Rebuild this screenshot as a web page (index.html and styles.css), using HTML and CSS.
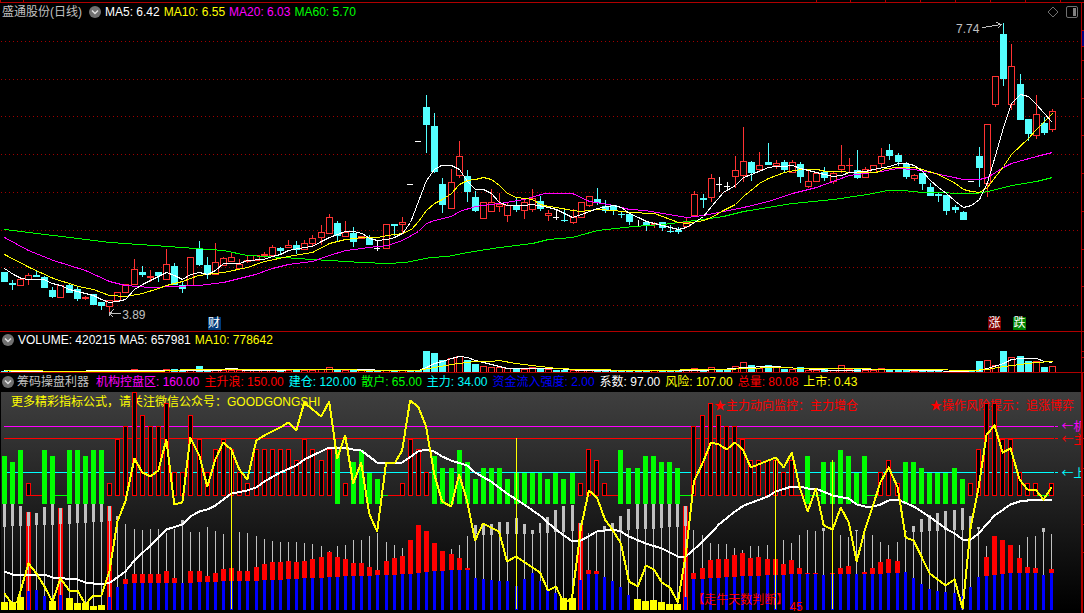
FILE: index.html
```html
<!DOCTYPE html>
<html lang="zh-CN">
<head>
<meta charset="utf-8">
<meta name="viewport" content="width=device-width, initial-scale=1">
<title>盛通股份(日线)</title>
<link rel="stylesheet" href="styles.css">
</head>
<body>
<main class="terminal">
  <section class="panel price" aria-label="日线">
    <svg class="plot" id="price-plot" viewBox="0 0 1081 331" preserveAspectRatio="none" aria-hidden="true"></svg>
    <header class="legend legend-price">
      <h1 class="name">盛通股份(日线)</h1>
      <button class="toggle" type="button" aria-label="展开主图指标"><svg viewBox="0 0 12 12"><circle cx="6" cy="6" r="6"/><path d="M3 4.5 6 7.5 9 4.5"/></svg></button>
      <span class="white">MA5: 6.42</span>
      <span class="yellow">MA10: 6.55</span>
      <span class="magenta">MA20: 6.03</span>
      <span class="lime">MA60: 5.70</span>
      <span class="tools">
        <button class="tool" type="button" aria-label="标记"><svg viewBox="0 0 12 12"><path d="M6 1 11 6 6 11 1 6Z"/></svg></button>
        <button class="tool" type="button" aria-label="侧栏"><svg viewBox="0 0 12 12"><rect x=".5" y=".5" width="11" height="11" rx="1.5"/><rect class="solid" x="7" y="2" width="3" height="8"/></svg></button>
      </span>
    </header>
    <span class="note high">7.74</span>
    <span class="note low">3.89</span>
    <span class="badge report">财</span>
    <span class="badge rise">涨</span>
    <span class="badge fall">跌</span>
  </section>

  <section class="panel volume" aria-label="成交量">
    <svg class="plot" id="volume-plot" viewBox="0 0 1081 42" preserveAspectRatio="none" aria-hidden="true"></svg>
    <header class="legend legend-volume">
      <button class="toggle" type="button" aria-label="展开成交量指标"><svg viewBox="0 0 12 12"><circle cx="6" cy="6" r="6"/><path d="M3 4.5 6 7.5 9 4.5"/></svg></button>
      <span class="white">VOLUME: 420215</span>
      <span class="white">MA5: 657981</span>
      <span class="yellow">MA10: 778642</span>
    </header>
  </section>

  <section class="indicator" aria-label="筹码操盘利器">
    <header class="legend legend-indicator">
      <button class="toggle" type="button" aria-label="展开副图指标"><svg viewBox="0 0 12 12"><circle cx="6" cy="6" r="6"/><path d="M3 4.5 6 7.5 9 4.5"/></svg></button>
      <h2 class="name">筹码操盘利器</h2>
      <span class="magenta">机构控盘区: 160.00</span>
      <span class="red">主升浪: 150.00</span>
      <span class="cyan">建仓: 120.00</span>
      <span class="lime">散户: 65.00</span>
      <span class="cyan">主力: 34.00</span>
      <span class="blue">资金流入强度: 2.00</span>
      <span class="white">系数: 97.00</span>
      <span class="yellow">风险: 107.00</span>
      <span class="red">总量: 80.08</span>
      <span class="yellow">上市: 0.43</span>
    </header>
    <div class="panel signals">
      <p class="caption promo yellow">更多精彩指标公式，请关注微信公众号：GOODGONGSHI</p>
      <p class="caption watch">★主力动向监控：主力增仓</p>
      <p class="caption risk">★操作风险提示：追涨博弈</p>
      <svg class="plot" id="signal-plot" viewBox="0 0 1081 218" preserveAspectRatio="none" aria-hidden="true"></svg>
      <p class="caption days">【走牛天数判断】</p>
      <p class="caption count">45</p>
      <span class="level level-control magenta">←机</span>
      <span class="level level-surge red">←主</span>
      <span class="level level-build cyan">←上</span>
    </div>
  </section>

  <svg class="axis" id="axis-plot" viewBox="0 0 3 613" preserveAspectRatio="none" aria-hidden="true"></svg>
</main>
<script src="chart.js"></script>
</body>
</html>
```

FILE: styles.css
```css
* { box-sizing: border-box; }

body {
  margin: 0;
  background: #000;
  color: #c0c0c0;
  font: 12px/16px "Liberation Sans", "Noto Sans CJK SC", sans-serif;
}

.terminal {
  display: grid;
  grid-template-columns: minmax(0, 1fr) 3px;
  grid-template-rows: minmax(0, 331fr) minmax(0, 42fr) minmax(0, 240fr);
  height: 100vh;
  min-height: 480px;
  overflow: hidden;
}

.axis {
  grid-column: 2;
  grid-row: 1 / 4;
  width: 100%;
  height: 100%;
  shape-rendering: crispEdges;
}

.panel {
  grid-column: 1;
  position: relative;
  display: grid;
  grid-template: minmax(0, 1fr) / minmax(0, 1fr);
  overflow: hidden;
}

.plot {
  grid-area: 1 / 1;
  display: block;
  width: 100%;
  height: 100%;
  shape-rendering: crispEdges;
}

.legend {
  grid-area: 1 / 1;
  align-self: start;
  z-index: 1;
  display: flex;
  align-items: center;
  gap: 4px;
  white-space: nowrap;
}

.legend-price { padding: 4px 3px 0 2px; }
.legend-price .name { margin-right: 3px; }
.legend-volume { padding: 1px 2px 0; }
.legend-indicator { height: 19px; padding: 0 2px 2px; gap: 5px; }
.legend-indicator .name { margin: 0 2px 0 -2px; }

.name { margin: 0; font: inherit; }

.toggle, .tool {
  flex: none;
  width: 12px;
  height: 12px;
  padding: 0;
  border: 0;
  background: none;
}
.toggle svg, .tool svg { display: block; width: 12px; height: 12px; }
.toggle circle { fill: #707070; }
.toggle path { fill: none; stroke: #e0e0e0; stroke-width: 1.5; }
.tools { display: flex; gap: 7px; margin-left: auto; }
.tool path, .tool rect { fill: none; stroke: #707070; }
.tool .solid { fill: #808080; stroke: none; }

.white { color: #fff; }
.yellow { color: #ff0; }
.magenta { color: #f0f; }
.lime { color: #0f0; }
.cyan { color: #0ff; }
.red { color: #f00; }
.blue { color: #00f; }

.note, .badge, .level, .caption { position: absolute; white-space: nowrap; }
.note.high { right: 9.4%; top: 6.3%; }
.note.low { left: 11.3%; top: 92.6%; }

.badge {
  top: 95.8%;
  width: 13px;
  height: 13px;
  color: #fff;
  line-height: 13px;
  text-align: center;
}
.report { left: 19.2%; background: #003a78; }
.rise { left: 91.4%; background: #800000; }
.fall { left: 93.7%; background: #008000; }

.indicator {
  grid-column: 1;
  display: flex;
  flex-direction: column;
  min-height: 0;
  padding-bottom: 3px;
}
.signals {
  flex: 1;
  min-height: 0;
  margin-left: 1px;
  overflow-x: clip;
  overflow-y: visible;
  background: linear-gradient(#3f3f3f, #000);
}
.signals .plot { z-index: 1; }
.caption { margin: 0; color: #f00; }
.caption.promo { left: 10px; top: 2px; color: #ff0; }
.caption.watch { right: 223px; top: 6px; }
.caption.risk { right: 7px; top: 6px; }
.caption.days { z-index: 2; left: 64%; top: 200px; }
.caption.count { z-index: 2; left: 73%; top: 209px; line-height: 12px; }
.level { z-index: 2; left: 98.2%; font-family: "Noto Sans CJK SC", sans-serif; }
.level-control { top: 12%; }
.level-surge { top: 18%; }
.level-build { top: 33.5%; }
```

FILE: chart.js
```js
const NS = "http://www.w3.org/2000/svg";
const UP = "#ff3232", DOWN = "#54ffff", AXIS = "#b00000";

// Centre column of bar i.
const col = i => 8 * i + 4 + Math.floor((i + 0.3) / 7.81);

function add(parent, tag, attrs) {
  const el = document.createElementNS(NS, tag);
  for (const k in attrs) el.setAttribute(k, attrs[k]);
  parent.appendChild(el);
  return el;
}
function layer(id, top, left = 0) {
  return add(document.getElementById(id), "g", { transform: `translate(${-left} ${-top})` });
}
const box = (g, x, y, w, h, fill) => add(g, "rect", { x, y, width: w, height: Math.max(h, 1), fill });
const hollow = (g, x, y, w, h, stroke) => {
  box(g, x, y, w, h, stroke);
  if (h > 2) box(g, x + 1, y + 1, w - 2, h - 2, "#000");
};
const line = (g, points, stroke, width = 1) =>
  add(g, "polyline", { points, fill: "none", stroke, "stroke-width": width, "stroke-linejoin": "round", transform: "translate(.5 .5)" });

/* ---- price ---- */
// kind, high, body top, body bottom, low
const candles = `c 272 272 282 282|c 280 283 285 290|r 279 279 286 286|r 273 275 280 285|c 271 275 277 277|c 276 277 288 288|c 287 290 297 298|r 285 285 298 298|c 284 285 293 293|c 287 289 299 301
r 296 297 299 300|c 294 294 305 305|c 302 302 306 310|r 300 300 307 312|r 292 292 301 301|r 284 284 293 293|r 259 269 285 285|c 266 272 275 277|r 270 276 278 282|c 272 272 276 282
r 249 264 280 280|c 263 266 285 285|c 281 285 289 293|r 257 257 286 286|c 241 248 265 266|c 257 265 275 279|r 243 262 275 275|r 257 258 266 266|r 252 257 262 262|r 259 264 269 269
r 255 260 262 263|r 255 255 261 261|r 252 254 256 258|r 245 247 256 256|c 247 248 251 254|r 240 245 248 248|c 241 245 250 254|r 240 243 250 250|r 235 238 244 246|r 225 232 238 245
r 214 217 234 234|c 221 223 236 241|r 221 232 237 237|c 227 233 242 247|r 236 236 239 239|c 235 237 245 245|w 241 248 249 251|r 224 224 249 249|c 224 224 226 236|r 217 222 225 233
w 184 184 185 184|w 141 141 142 141|c 95 107 125 153|c 113 126 172 173|c 178 184 205 213|r 169 182 209 209|r 141 156 176 178|c 170 176 192 202|c 191 197 211 212|r 202 202 219 219
r 189 202 212 212|r 193 204 207 212|r 202 205 216 222|c 197 205 210 212|r 200 202 211 219|r 189 198 210 212|c 196 201 209 211|r 210 213 216 221|w 209 217 218 220|c 210 220 221 222
r 209 217 223 224|r 202 202 218 218|r 196 196 206 207|c 188 199 203 205|c 200 206 211 213|c 205 205 211 215|c 212 214 215 218|c 214 214 222 225|w 220 226 227 226|c 222 222 225 231
r 222 223 225 228|c 222 222 228 231|c 225 231 232 233|c 227 230 232 234|r 218 222 227 227|r 191 194 216 216|c 194 198 200 208|r 174 178 198 202|w 177 184 185 192|w 182 186 187 191
r 156 170 177 188|r 127 161 176 182|c 161 162 173 181|r 152 165 170 171|c 143 162 165 165|r 160 163 166 169|c 160 162 170 172|r 160 162 173 173|c 162 164 177 183|r 170 181 187 188
r 173 173 182 182|c 167 172 178 181|r 171 173 182 184|r 145 165 170 173|r 158 165 166 172|c 150 170 178 179|r 167 169 178 178|r 165 165 173 173|r 148 156 164 167|c 144 150 156 160
c 153 155 162 166|c 162 164 177 179|r 174 175 179 181|c 173 173 184 190|c 183 187 196 196|c 193 194 196 202|c 195 195 211 215|c 205 207 210 213|c 211 212 220 220|w 181 181 182 181
c 147 156 168 187|r 124 124 184 197|r 76 76 105 107|c 23 34 79 86|r 44 66 105 110|c 74 84 120 120|c 119 119 134 141|r 95 114 136 139|c 117 123 133 135|r 109 111 130 132`
  .split(/[|\n]/).map(s => { const [k, ...n] = s.split(" "); return [k, ...n.map(Number)]; });

const price = layer("price-plot", 0);
for (const y of [41, 79, 116, 154, 192, 230, 267, 305])
  add(price, "line", { x1: 1, x2: 1079, y1: y + 0.5, y2: y + 0.5, stroke: "#a00000", "stroke-dasharray": "1 3" });
box(price, 0, 2, 1081, 1, AXIS);
for (const x of [0, 23, 816, 850, 885, 920, 955, 990, 1025, 1060]) box(price, x, 0, 1, 2, AXIS);

candles.forEach(([k, hi, top, bot, lo], i) => {
  const x = col(i);
  const c = k === "c" ? DOWN : k === "r" ? UP : "#fff";
  if (lo > hi) box(price, x, hi, 1, lo - hi, c);
  if (k === "r" && bot - top > 2) hollow(price, x - 3, top, 7, bot - top, c);
  else box(price, x - 3, top, k === "w" ? 6 : 7, bot - top, c);
});

line(price, "4,229 53,235 110,242 182,247 223,250 247,255 283,257 312,259 362,262 387,263 405,262 430,257 447,256 467,252 499,247 532,243 548,239 572,237 597,230 633,226 662,224 695,220 723,216 743,211 792,203 833,199 867,194 887,190 903,190 922,192 975,193 988,191 1011,185 1036,181 1052,177", "#0f0");
line(price, "4,237 28,250 53,260 85,270 109,281 125,285 150,287 198,285 223,282 255,274 272,268 288,264 312,261 329,255 345,250 362,248 368,247 387,245 402,240 418,231 426,223 434,220 451,216 459,211 475,206 499,203 524,199 544,193 572,193 589,201 613,205 629,209 645,210 662,213 686,217 703,215 723,211 743,207 768,201 792,193 816,187 849,175 881,171 897,168 914,169 930,172 963,179 979,179 987,177 1003,167 1011,163 1036,156 1052,152", "#f0f");
line(price, "4,254 29,267 53,278 78,286 93,289 109,295 125,296 142,293 158,288 166,285 182,281 198,275 223,272 247,267 264,261 288,256 312,252 329,243 345,239 362,237 377,237 387,235 402,233 411,229 418,221 426,210 434,203 442,199 451,193 459,184 467,180 475,179 483,177 491,179 499,185 507,193 516,197 532,199 540,204 548,206 556,207 572,210 581,211 597,209 613,210 629,212 654,213 662,216 678,222 686,223 703,220 711,217 723,210 735,204 743,196 759,183 768,178 784,172 800,169 817,169 825,171 865,172 876,172 885,168 898,167 914,167 922,169 938,174 955,183 963,189 971,191 979,192 987,187 1003,166 1011,154 1028,138 1036,129 1052,113", "#ff0");
line(price, "4,268 13,274 21,278 28,279 43,279 52,283 60,285 69,289 77,291 93,295 101,299 109,302 117,301 125,299 134,289 142,284 150,280 158,276 166,272 174,275 182,279 190,274 199,272 207,274 215,270 223,263 239,263 247,260 263,259 272,256 280,254 288,250 304,247 312,246 321,241 329,237 345,231 353,231 362,233 369,238 377,240 387,239 394,237 402,233 410,222 418,201 426,180 434,169 441,165 451,165 459,169 467,181 475,189 483,189 491,193 499,202 507,205 524,205 532,204 548,207 556,209 564,213 572,217 581,214 589,211 597,208 613,205 621,207 629,213 638,217 646,221 654,223 662,225 670,227 678,229 686,227 694,222 703,216 711,206 723,192 735,185 743,177 751,174 768,167 776,166 784,166 792,165 800,168 808,170 824,174 833,176 841,175 849,172 865,171 873,169 889,166 898,163 906,163 914,165 922,171 930,180 938,187 946,193 955,201 963,207 971,205 979,199 987,182 995,155 1003,127 1011,103 1020,94 1028,96 1036,104 1044,113 1052,122", "#fff");
line(price, "982,27 1001,24 996,22 1001,24 997,28", "#c0c0c0");
line(price, "120,313 109,313 113,309 109,313 113,317", "#c0c0c0");
line(price, "109,315 109,312 111,312", "#c0c0c0");

/* ---- volume ---- */
const tops = { 16: 369, 20: 369, 21: 369, 24: 366, 25: 369, 39: 369, 40: 367, 41: 369, 52: 351, 53: 353, 54: 360, 55: 358, 56: 356, 57: 360, 58: 364, 59: 366, 60: 367, 61: 367, 62: 368, 63: 369, 64: 369, 65: 367, 66: 368, 67: 369, 85: 368, 87: 367, 90: 366, 91: 362, 92: 365, 93: 368, 94: 365, 95: 366, 96: 369, 97: 369, 98: 367, 101: 368, 103: 365, 104: 369, 105: 369, 108: 368, 120: 361, 121: 360, 122: 365, 123: 351, 124: 357, 125: 356, 126: 361, 127: 361, 128: 367, 129: 366 };
const vol = layer("volume-plot", 331);
candles.forEach(([k], i) => {
  const y = tops[i] || (i < 16 || (i > 111 && i < 120) ? 371 : 370);
  if (k === "r") hollow(vol, col(i) - 3, y, 7, 373 - y, UP);
  else box(vol, col(i) - 3, y, 7, 372 - y, DOWN);
});
box(vol, 0, 331, 1081, 1, AXIS);
box(vol, 0, 372, 1081, 1, AXIS);
line(vol, "4,370 17,371 41,371 130,370 160,370 219,370 227,368 236,368 243,370 330,369 418,370 426,367 434,363 442,361 451,358 459,356 467,357 475,360 491,364 507,368 532,368 556,368 580,370 700,370 735,368 743,367 768,366 776,366 784,367 800,368 833,370 890,369 960,371 978,370 987,368 1003,363 1011,359 1020,358 1036,358 1044,361 1052,362", "#fff");
line(vol, "4,370 40,370 45,371 160,371 170,370 190,369 350,369 362,370 418,370 434,367 451,364 467,362 475,361 491,361 499,360 515,363 540,366 556,368 580,369 640,370 720,369 751,368 768,367 815,368 925,369 970,370 987,369 1003,366 1020,364 1036,362 1052,361", "#ff0");

/* ---- signals ---- */
const sig = layer("signal-plot", 392, 1);
for (const [y, c] of [[426, "#f0f"], [438, "#f00"], [472, "#0ff"]]) {
  box(sig, 4, y, 1051, 1, c);
  box(sig, 1056, y, 3, 1, c);
}

// g = green block, r = hollow red block, z/y = zero line in green/red
const waves = `g456 g462 g450 r483 y0 g450 g456 z0 g450 g450 g456 g450 g450 r483 r439 r426 r392 r415 r426 r426
r403 r472 r472 r415 r439 r472 r449 r439 r449 r472 r483 r449 r449 r449 r449 r449 r460 r439 r449 r460
r449 g450 r483 g462 g450 g473 g479 z0 y0 r483 r439 r449 r472 g456 g468 g468 g450 g462 g479 g468
g468 g468 g479 g473 g473 g473 g473 g479 g473 g479 g473 r483 r449 r460 r483 y0 g450 g468 g468 g456
g456 g462 g462 g468 z0 r426 r415 r403 r415 r426 r426 r439 r460 r460 r460 r460 r472 r460 y0 g456
z0 g462 g462 g450 g456 g473 g456 z0 r472 r460 r483 g462 g462 g468 g473 g473 g473 g468 g479 r483
r449 r403 r403 r439 r439 r472 r483 r483 z0 r483`.split(/\s+/);
waves.forEach((w, i) => {
  const x = col(i), y = +w.slice(1);
  if (w[0] === "z") box(sig, x - 6, 495, 16, 1, "#0f0");
  if (w[0] === "y") box(sig, x - 6, 495, 15, 1, "#f00");
  if (w[0] === "r") hollow(sig, x - 2, y, 5, 496 - y, "#f00");
  if (w[0] === "g") box(sig, x - 2, y, 5, 504 - y, "#0f0");
});

// T = grey block top,bottom,blue   Y = grey block top,bottom,yellow
// F = grey block with full red column   L = thin line top,red,blue
const stacks = `Y504,527,602 Y504,526,602 Y506,526,597 F512,526,591 T513,525,590 T507,525,596 Y504,525,601 F508,524,595 Y505,524,598 Y504,523,603
Y504,523,603 Y504,522,606 Y504,522,605 F506,521,597 T516,520,587 L524,579,584 L529,574,583 L530,574,583 L529,574,583 L529,574,583
L533,571,583 L529,578,583 T520,524,583 L532,571,583 L532,571,582 L527,576,582 L531,573,582 L534,569,581 L535,568,581 L532,571,581
L533,571,581 L536,567,581 L539,564,580 L541,562,580 L542,562,580 L542,561,579 L542,562,579 L543,561,578 L544,559,578 L546,557,578
L551,552,577 L546,557,577 L545,559,576 L540,563,576 L540,563,576 L536,567,576 L533,570,575 L542,561,575 L545,558,575 L548,556,574
L540,540,574 L525,525,573 L531,531,572 L543,543,571 L551,551,571 L549,554,570 L545,558,570 L536,568,570 T525,534,578 T523,535,579
T524,535,580 T522,534,581 T522,534,581 T518,534,586 T524,534,579 T530,534,573 T523,533,581 T517,533,590 T510,532,593 Y506,532,598
Y505,531,598 F523,531,580 L533,570,574 L532,571,574 T526,530,577 T523,530,581 T516,531,587 T509,530,595 Y504,529,599 Y504,529,601
Y504,529,600 Y504,528,602 Y504,527,604 Y504,527,604 F506,526,597 L530,573,579 L535,568,579 L543,560,578 L544,559,578 L544,559,577
L548,555,577 L550,553,576 L546,558,576 L546,557,576 L545,559,575 L545,559,575 L540,564,575 L543,560,574 L535,568,574 L530,573,574
L531,573,574 T528,531,575 L530,573,574 L535,568,574 L537,566,574 T530,531,574 L534,572,574 L535,568,574 L542,562,574 L545,559,573
L542,561,573 T531,532,572 T526,532,578 T519,532,584 T515,531,589 T513,531,591 T511,530,592 T510,530,593 T508,530,596 T516,529,587
T527,529,577 L546,557,576 L536,536,575 L540,540,574 L545,545,573 L545,558,573 L537,567,573 L536,568,573 T528,532,575 L534,569,573`.split(/\s+/);
stacks.forEach((s, i) => {
  const x = col(i), [a, b, c] = s.slice(1).split(",").map(Number);
  if (s[0] === "F") box(sig, x - 2, a, 5, 610 - a, "#f00");
  box(sig, x, a, 1, c - a, "#c0c0c0");
  if (s[0] === "L") box(sig, x - 2, b, 5, c - b, "#f00");
  else box(sig, x - 1, a, 3, b - a, "#c0c0c0");
  if (s[0] === "Y") box(sig, x - 3, c, 7, 610 - c, "#ff0");
  else box(sig, x - 1, c, 3, 610 - c, "#00f");
});

line(sig, "4,571 12,574 44,574 52,577 77,579 85,582 101,584 110,582 125,571 134,560 150,545 166,529 182,524 190,516 199,511 207,509 215,505 231,493 247,490 256,487 264,481 280,472 296,465 304,459 329,447 345,447 353,449 361,450 377,462 402,462 418,451 426,449 434,451 442,456 451,460 467,465 475,472 491,481 507,493 524,504 540,515 550,524 556,529 571,540 581,540 597,531 613,529 621,531 629,536 646,543 662,548 678,556 686,556 703,541 711,533 719,524 735,511 744,505 768,496 776,491 792,486 800,486 808,488 816,488 833,495 849,498 857,504 865,506 873,506 881,504 889,500 898,499 914,506 922,511 938,522 946,528 955,533 963,539 971,539 979,533 995,515 1011,504 1020,501 1036,499 1052,499", "#fff", 2);
line(sig, "4,593 12,604 17,601 28,563 36,573 44,586 52,601 60,578 69,590 77,590 85,604 93,595 101,595 109,571 117,521 125,501 134,458 142,472 150,476 158,470 166,439 174,504 182,502 190,437 199,455 207,486 215,459 223,442 231,449 239,469 247,479 256,440 264,435 280,427 288,422 296,430 304,402 321,416 329,401 337,458 345,435 353,483 361,462 369,513 377,531 386,462 395,462 402,450 410,400 418,406 426,426 434,473 442,501 451,506 459,474 467,500 475,540 483,523 499,531 507,561 516,556 540,572 548,590 556,586 564,603 572,598 581,527 589,490 597,497 605,519 613,530 621,543 629,581 638,586 646,565 654,569 662,582 670,587 678,602 686,553 694,481 703,462 711,442 719,444 727,449 735,442 743,449 751,467 776,457 784,467 792,452 800,487 808,511 816,488 824,525 833,529 841,507 849,522 857,561 865,530 873,506 881,481 889,467 898,487 906,537 914,540 930,573 946,585 955,579 963,608 971,527 979,487 987,434 995,425 1003,452 1011,448 1020,479 1028,489 1036,489 1044,499 1052,487", "#ff0", 2);
for (const [x, y] of [[231, 449], [516, 438], [776, 460], [833, 460]]) box(sig, x, y, 1, 609 - y, "#ff0");

/* ---- right axis ---- */
const axis = layer("axis-plot", 0);
box(axis, 0, 2, 3, 1, AXIS);
box(axis, 0, 3, 1, 610, AXIS);
box(axis, 1, 373, 1, 240, AXIS);
box(axis, 1, 31, 2, 15, "#000080");
for (const y of [30, 46, 60, 98, 135, 173, 211, 249, 286, 331, 351, 357, 372, 438, 468, 495, 524, 552]) box(axis, 1, y, 2, 1, AXIS);
```
